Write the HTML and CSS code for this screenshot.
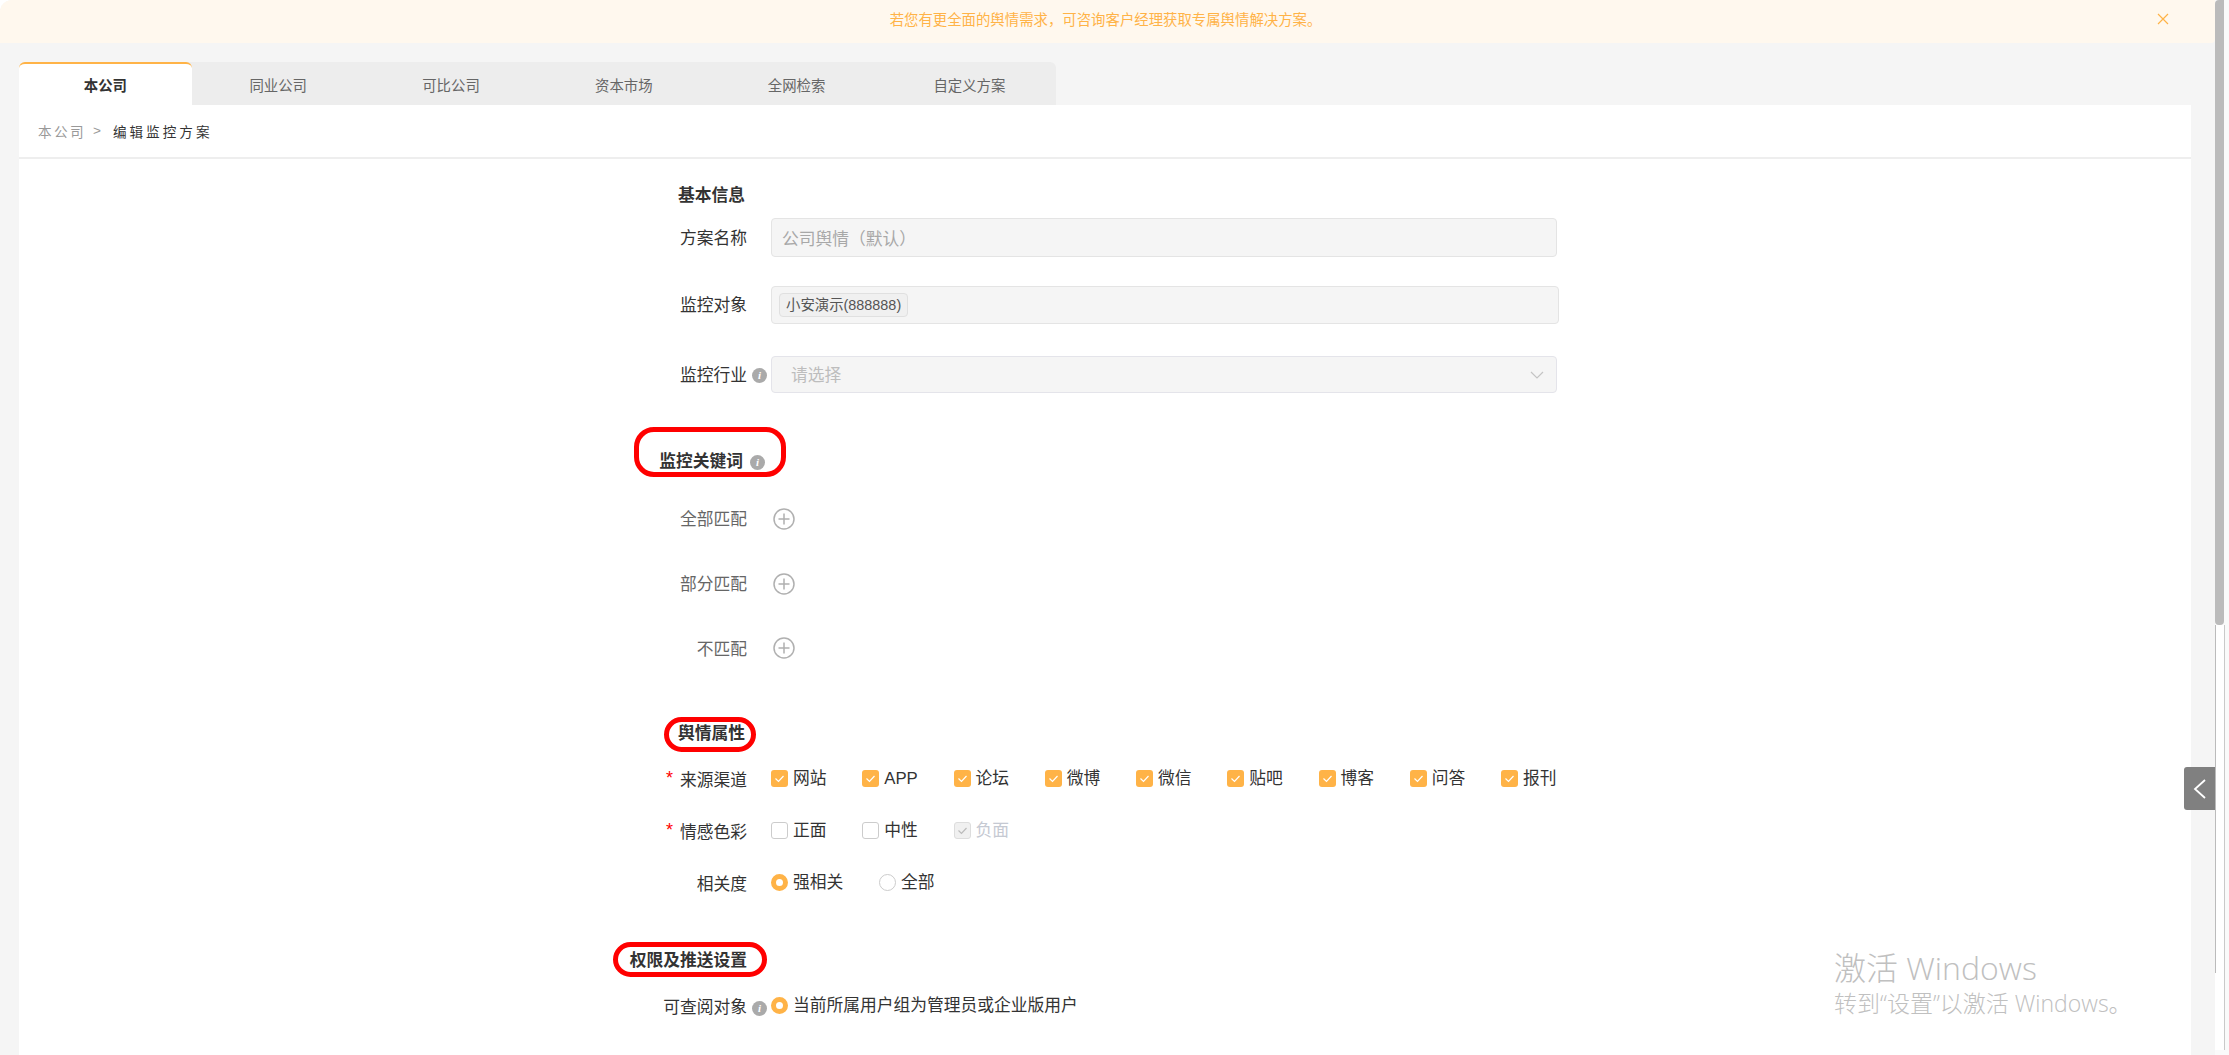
FILE: index.html
```html
<!DOCTYPE html>
<html lang="zh-CN">
<head>
<meta charset="utf-8">
<title>编辑监控方案</title>
<link rel="stylesheet" href="styles.css">
</head>
<body>
<div class="app">
  <main class="main">
    <div class="banner">
      <span class="banner-text">若您有更全面的舆情需求，可咨询客户经理获取专属舆情解决方案。</span>
      <svg class="banner-close" width="12" height="12" viewBox="0 0 12 12"><path d="M1 1l10 10M11 1L1 11"/></svg>
    </div>
    <div class="content">
      <nav class="tabs">
        <a class="tab tab-active">本公司</a>
        <a class="tab">同业公司</a>
        <a class="tab">可比公司</a>
        <a class="tab">资本市场</a>
        <a class="tab">全网检索</a>
        <a class="tab">自定义方案</a>
      </nav>
      <section class="panel">
        <div class="crumbs"><span class="crumb-root">本公司</span><span class="crumb-sep">&gt;</span><span class="crumb-current">编辑监控方案</span></div>
        <form class="form">
          <div class="row row-title-basic">
            <div class="label title-label pad-26"><span class="title">基本信息</span></div>
          </div>
          <div class="row field-name">
            <div class="label"><span>方案名称</span><i class="slot"></i></div>
            <div class="input input-name">公司舆情（默认）</div>
          </div>
          <div class="row field-target">
            <div class="label"><span>监控对象</span><i class="slot"></i></div>
            <div class="input input-target"><span class="chip">小安演示(888888)</span></div>
          </div>
          <div class="row field-industry">
            <div class="label"><span>监控行业</span><i class="slot"><b class="info">i</b></i></div>
            <div class="input input-select">
              <span class="placeholder">请选择</span>
              <svg class="chev" width="14" height="8" viewBox="0 0 14 8"><path d="M1 1l6 6 6-6"/></svg>
            </div>
          </div>

          <div class="row row-title-kw">
            <div class="label title-label"><span class="title">监控关键词<span class="ring ring-kw"></span></span><i class="slot slot-kw"><b class="info">i</b></i></div>
          </div>
          <div class="row add-row add-1">
            <div class="label muted"><span>全部匹配</span><i class="slot"></i></div>
            <svg class="plus" width="22" height="22" viewBox="0 0 22 22"><circle cx="11" cy="11" r="10"/><path d="M5.5 11h11M11 5.5v11"/></svg>
          </div>
          <div class="row add-row add-2">
            <div class="label muted"><span>部分匹配</span><i class="slot"></i></div>
            <svg class="plus" width="22" height="22" viewBox="0 0 22 22"><circle cx="11" cy="11" r="10"/><path d="M5.5 11h11M11 5.5v11"/></svg>
          </div>
          <div class="row add-row add-3">
            <div class="label muted"><span>不匹配</span><i class="slot"></i></div>
            <svg class="plus" width="22" height="22" viewBox="0 0 22 22"><circle cx="11" cy="11" r="10"/><path d="M5.5 11h11M11 5.5v11"/></svg>
          </div>

          <div class="row row-title-attr">
            <div class="label title-label pad-26"><span class="title">舆情属性<span class="ring ring-attr"></span></span></div>
          </div>
          <div class="row opt-row opt-source">
            <div class="label low"><em class="star">*</em><span>来源渠道</span><i class="slot"></i></div>
            <div class="options">
              <label class="opt"><i class="box on"><svg width="17" height="17" viewBox="0 0 17 17"><path d="M4.5 8.5l3 3 5-5.5"/></svg></i>网站</label>
              <label class="opt"><i class="box on"><svg width="17" height="17" viewBox="0 0 17 17"><path d="M4.5 8.5l3 3 5-5.5"/></svg></i>APP</label>
              <label class="opt"><i class="box on"><svg width="17" height="17" viewBox="0 0 17 17"><path d="M4.5 8.5l3 3 5-5.5"/></svg></i>论坛</label>
              <label class="opt"><i class="box on"><svg width="17" height="17" viewBox="0 0 17 17"><path d="M4.5 8.5l3 3 5-5.5"/></svg></i>微博</label>
              <label class="opt"><i class="box on"><svg width="17" height="17" viewBox="0 0 17 17"><path d="M4.5 8.5l3 3 5-5.5"/></svg></i>微信</label>
              <label class="opt"><i class="box on"><svg width="17" height="17" viewBox="0 0 17 17"><path d="M4.5 8.5l3 3 5-5.5"/></svg></i>贴吧</label>
              <label class="opt"><i class="box on"><svg width="17" height="17" viewBox="0 0 17 17"><path d="M4.5 8.5l3 3 5-5.5"/></svg></i>博客</label>
              <label class="opt"><i class="box on"><svg width="17" height="17" viewBox="0 0 17 17"><path d="M4.5 8.5l3 3 5-5.5"/></svg></i>问答</label>
              <label class="opt"><i class="box on"><svg width="17" height="17" viewBox="0 0 17 17"><path d="M4.5 8.5l3 3 5-5.5"/></svg></i>报刊</label>
            </div>
          </div>
          <div class="row opt-row opt-tone">
            <div class="label low"><em class="star">*</em><span>情感色彩</span><i class="slot"></i></div>
            <div class="options">
              <label class="opt"><i class="box"></i>正面</label>
              <label class="opt"><i class="box"></i>中性</label>
              <label class="opt opt-disabled"><i class="box off"><svg width="17" height="17" viewBox="0 0 17 17"><path d="M4.5 8.5l3 3 5-5.5"/></svg></i>负面</label>
            </div>
          </div>
          <div class="row opt-row opt-rel">
            <div class="label low"><span>相关度</span><i class="slot"></i></div>
            <div class="options">
              <label class="opt opt-auto"><i class="radio on"></i>强相关</label>
              <label class="opt"><i class="radio"></i>全部</label>
            </div>
          </div>

          <div class="row row-title-perm">
            <div class="label title-label pad-24"><span class="title">权限及推送设置<span class="ring ring-perm"></span></span></div>
          </div>
          <div class="row opt-row opt-view">
            <div class="label low"><span>可查阅对象</span><i class="slot"><b class="info">i</b></i></div>
            <div class="options">
              <label class="opt opt-auto"><i class="radio on"></i>当前所属用户组为管理员或企业版用户</label>
            </div>
          </div>
        </form>
      </section>
    </div>
    <button class="drawer-handle" type="button">
      <svg width="14" height="22" viewBox="0 0 14 22"><path d="M12 2L2 11l10 9"/></svg>
    </button>
  </main>
  <aside class="scrollbar">
    <div class="thumb"></div>
    <div class="track"><div class="track-line"></div></div>
  </aside>
</div>
<div class="watermark">
  <div class="wm-title">激活 Windows</div>
  <div class="wm-sub">转到“设置”以激活 Windows。</div>
</div>
</body>
</html>
```

FILE: styles.css
```css
* { box-sizing: border-box; }
html, body { margin: 0; height: 100%; overflow: hidden; background: #fff; }
body {
  position: relative;
  font-family: "Liberation Sans", "Noto Sans CJK SC", sans-serif;
  font-size: 16.75px;
  color: #333;
}
i, em, b { font-style: normal; font-weight: normal; }

.app { display: flex; height: 1055px; }
.main {
  position: relative;
  flex: 1;
  min-width: 0;
  display: flex;
  flex-direction: column;
  background: #f5f5f5;
  border-top-left-radius: 12px;
  overflow: hidden;
}

/* banner */
.banner {
  flex: none;
  height: 43px;
  display: flex;
  align-items: center;
  justify-content: center;
  position: relative;
  background: #fff8ee;
  border-bottom-right-radius: 4px;
  padding: 0 4px 3px 0;
}
.banner-text { font-size: 14.4px; color: #ffb347; line-height: 20px; }
.banner-close {
  position: absolute;
  right: 46px;
  top: 13px;
}
.banner-close path { fill: none; stroke: #ffb347; stroke-width: 1.2; }

/* tabs + panel */
.content {
  flex: 1;
  min-height: 0;
  display: flex;
  flex-direction: column;
  padding: 19px 24px 0 19px;
}
.tabs {
  flex: none;
  display: flex;
  height: 43px;
  width: 1037px;
  background: #ededed;
  border-radius: 6px 6px 0 0;
}
.tab {
  width: 172.8px;
  display: flex;
  align-items: center;
  justify-content: center;
  font-size: 14.4px;
  color: #666;
  padding-top: 1px;
}
.tab-active {
  background: #fff;
  color: #333;
  font-weight: bold;
  border-top: 2px solid #ffb347;
  border-radius: 6px 6px 0 0;
  padding: 0 0 1px;
}
.panel { flex: 1; min-height: 0; background: #fff; overflow: hidden; }
.crumbs {
  height: 54px;
  display: flex;
  align-items: center;
  padding: 0 0 1px 19px;
  border-bottom: 2px solid #eeeeee;
  font-size: 13.6px;
}
.crumb-root { color: #999; letter-spacing: 2.4px; }
.crumb-sep { color: #999; margin: 0 12px 0 7px; }
.crumb-current { color: #333; letter-spacing: 3px; }

/* form */
.form { margin-left: 594px; width: 960px; padding-top: 24px; }
.row { display: flex; align-items: center; }
.label {
  flex: none;
  width: 158px;
  display: flex;
  justify-content: flex-end;
  align-items: center;
  line-height: 24px;
  color: #333;
  padding-top: 2px;
}
.slot { flex: none; width: 24px; height: 16px; display: flex; align-items: center; padding-left: 5px; }
.slot-kw { width: 28px; padding-left: 7px; }
.muted { color: #666; }
.label.low { padding-top: 6px; }
.add-3 .label { padding-top: 4px; }
.star { color: #f00; font-size: 18px; margin-right: 7px; position: relative; top: -3px; }
.info {
  display: block;
  width: 15px;
  height: 15px;
  border-radius: 50%;
  background: #aaa;
  color: #fff;
  font: italic bold 11px/15px "Liberation Serif", serif;
  text-align: center;
}

.title { position: relative; font-weight: bold; line-height: 24px; }
.title-label { height: 24px; }
.pad-26 { padding-right: 26px; }
.pad-24 { padding-right: 24px; }

.ring { position: absolute; border: 5px solid #f00; }
.ring-kw { left: -25px; right: -43px; top: -23px; bottom: -3px; border-radius: 20px; }
.ring-attr { left: -14px; right: -11px; top: -5px; bottom: -6px; border-radius: 18px; }
.ring-perm { left: -17px; right: -20px; top: -7px; bottom: -4px; border-radius: 18px; }

.input {
  flex: none;
  width: 786px;
  display: flex;
  align-items: center;
  background: #f5f5f5;
  border: 1px solid #e4e4e4;
  border-radius: 4px;
}
.input-name { height: 39px; padding-left: 10px; color: #a8a8a8; }
.input-target { height: 38px; width: 788px; padding-left: 7px; }
.input-select { height: 37px; padding: 0 12px 0 19px; justify-content: space-between; border-color: #e4e4ea; }
.placeholder { color: #bdbdbd; margin-bottom: 2px; }
.chev path { fill: none; stroke: #c4c4c4; stroke-width: 1.2; }
.chip {
  height: 24px;
  line-height: 22px;
  padding: 0 6px;
  font-size: 14.4px;
  color: #555;
  background: #f0f0f0;
  border: 1px solid #e0e0e0;
  border-radius: 4px;
}

.row-title-basic { height: 24px; }
.field-name { margin-top: 11px; }
.field-target { margin-top: 29px; }
.field-industry { margin-top: 32px; }
.row-title-kw { margin-top: 56px; }
.add-row { height: 28px; }
.add-1 { margin-top: 32px; }
.add-2 { margin-top: 37px; }
.add-3 { margin-top: 36px; }
.plus { margin-left: 2px; }
.plus circle, .plus path { fill: none; stroke: #b0b0b0; stroke-width: 1.5; }
.row-title-attr { margin-top: 59px; }
.opt-row { height: 24px; }
.opt-source { margin-top: 21px; }
.opt-tone { margin-top: 28px; }
.opt-rel { margin-top: 28px; }
.row-title-perm { margin-top: 54px; }
.opt-view { margin-top: 21px; }

.options { display: flex; align-items: center; }
.opt {
  flex: none;
  width: 91.25px;
  display: flex;
  align-items: center;
  gap: 5px;
  line-height: 24px;
  color: #333;
  white-space: nowrap;
  padding-top: 2px;
}
.opt-auto { width: 108px; }
.opt-view .opt-auto { width: auto; }
.opt-disabled { color: #c5c9d2; }
.box {
  flex: none;
  width: 17px;
  height: 17px;
  margin-top: -2px;
  display: block;
  background: #fff;
  border: 1px solid #ccc;
  border-radius: 3px;
}
.box svg { display: block; }
.box path { fill: none; stroke-width: 1.2; }
.box.on { background: #ffb347; border: 0; }
.box.on path { stroke: #fff; }
.box.off { background: #f0f0f0; border-color: #ddd; }
.box.off svg { margin: -1px; }
.box.off path { stroke: #bbb; }
.radio {
  flex: none;
  width: 17px;
  height: 17px;
  margin-top: -2px;
  border: 1px solid #ccc;
  border-radius: 50%;
  background: #fff;
}
.radio.on { border: 5.5px solid #ffb347; }

/* collapse handle */
.drawer-handle {
  position: absolute;
  right: 0;
  top: 767px;
  width: 31px;
  height: 43px;
  padding: 0;
  border: 0;
  border-radius: 3px 0 0 3px;
  background: #808080;
  display: flex;
  align-items: center;
  justify-content: center;
}
.drawer-handle path { fill: none; stroke: #fff; stroke-width: 1.8; }

/* outer scrollbar */
.scrollbar { flex: none; width: 14px; display: flex; flex-direction: column; background: #fafafa; }
.thumb { flex: none; width: 9px; height: 625px; background: #bbb; border-radius: 4px 0 4px 4px; }
.track {
  flex: 1;
  width: 10px;
  margin-bottom: 5px;
  background: #fff;
  border-right: 1px solid #c9c9c9;
}
.track-line { width: 1px; height: 348px; background: #bbb; }

/* OS activation watermark */
.watermark { position: absolute; left: 1834px; top: 948px; color: #c0c0c0; font-family: "Open Sans", "Noto Sans CJK SC", sans-serif; }
.wm-title { font-size: 32px; line-height: 40px; font-weight: 300; }
.wm-sub { font-size: 23px; line-height: 30px; font-weight: 300; }
```
